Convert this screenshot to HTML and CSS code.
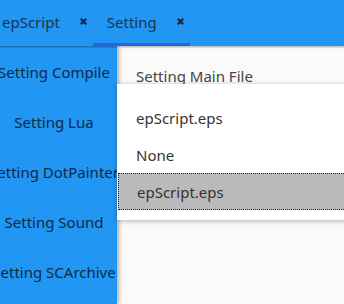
FILE: index.html
```html
<!DOCTYPE html>
<html lang="en">
<head>
    <meta charset="UTF-8" />
    <meta name="viewport" content="width=device-width, initial-scale=1.0" />
    <title>Setting</title>
    <link rel="stylesheet" href="styles.css">
</head>
<body>
    <div class="app">
        <div class="tabs">
            <div class="tab">
                <span class="tab-title">epScript</span>
                <svg class="tab-close" width="7" height="7" viewBox="0 0 7 7"><path d="M0.8 0.8L6.2 6.2M6.2 0.8L0.8 6.2" /></svg>
            </div>
            <div class="tab active">
                <span class="tab-title">Setting</span>
                <svg class="tab-close" width="7" height="7" viewBox="0 0 7 7"><path d="M0.8 0.8L6.2 6.2M6.2 0.8L0.8 6.2" /></svg>
            </div>
        </div>

        <div class="main">
            <div class="sidebar">
                <div class="nav-item">Setting Compile</div>
                <div class="nav-item">Setting Lua</div>
                <div class="nav-item">Setting DotPainter</div>
                <div class="nav-item">Setting Sound</div>
                <div class="nav-item">Setting SCArchive</div>
            </div>

            <div class="content">
                <div class="field-label">Setting Main File</div>

                <div class="popup">
                    <div class="popup-item">epScript.eps</div>
                    <div class="popup-item">None</div>
                    <div class="popup-item selected">epScript.eps</div>
                </div>
            </div>
        </div>
    </div>
</body>
</html>
```

FILE: styles.css
```css
* { margin: 0; padding: 0; box-sizing: border-box; }
body {
    width: 344px;
    height: 304px;
    overflow: hidden;
    background: #fafafa;
    font-family: 'Noto Sans', 'Open Sans', sans-serif;
    font-size: 15px;
}
.app {
    display: flex;
    flex-direction: column;
    height: 304px;
}
.tabs {
    display: flex;
    height: 46px;
    margin-left: -12px;
    padding-left: 12px;
    margin-left: -12px;
    background: #2196f3;
    box-shadow: 0 1px 2px rgba(0, 0, 0, 0.35);
    position: relative;
    z-index: 2;
    flex-shrink: 0;
}
.tab {
    display: flex;
    align-items: center;
    gap: 20px;
    padding: 0 6px 0 14px;
    border-bottom: 3px solid transparent;
    color: #1a3552;
}
.tab:first-child {
    margin-left: -12px;
}
.tab.active {
    border-bottom-color: #2f5fe3;
}
.tab-close {
    stroke: #14283d;
    stroke-width: 2.1;
    fill: none;
}
.main {
    display: flex;
    flex: 1;
    min-height: 0;
}
.sidebar {
    width: 117px;
    flex-shrink: 0;
    padding-top: 1px;
    background: #2196f3;
    overflow: hidden;
    box-shadow: 2px 0 4px rgba(0, 0, 0, 0.3);
    position: relative;
    z-index: 1;
}
.nav-item {
    width: 108px;
    height: 50px;
    display: flex;
    justify-content: center;
    align-items: center;
    white-space: nowrap;
    color: #0f2a45;
}
.content {
    flex: 1;
    position: relative;
    background: #fafafa;
}
.field-label {
    padding: 20px 0 0 19px;
    color: #444;
    line-height: 20px;
}
.popup {
    position: absolute;
    left: 0;
    top: 38px;
    width: 240px;
    padding: 15px 0 10px;
    background: #fff;
    box-shadow: 0 1px 5px rgba(0, 0, 0, 0.3);
    z-index: 3;
}
.popup-item {
    height: 37px;
    display: flex;
    align-items: center;
    padding-left: 19px;
    color: #333;
}
.popup-item.selected {
    background: #bababa;
    border: 1px dotted #222;
    margin: 0 1px;
    padding-left: 18px;
}
```
